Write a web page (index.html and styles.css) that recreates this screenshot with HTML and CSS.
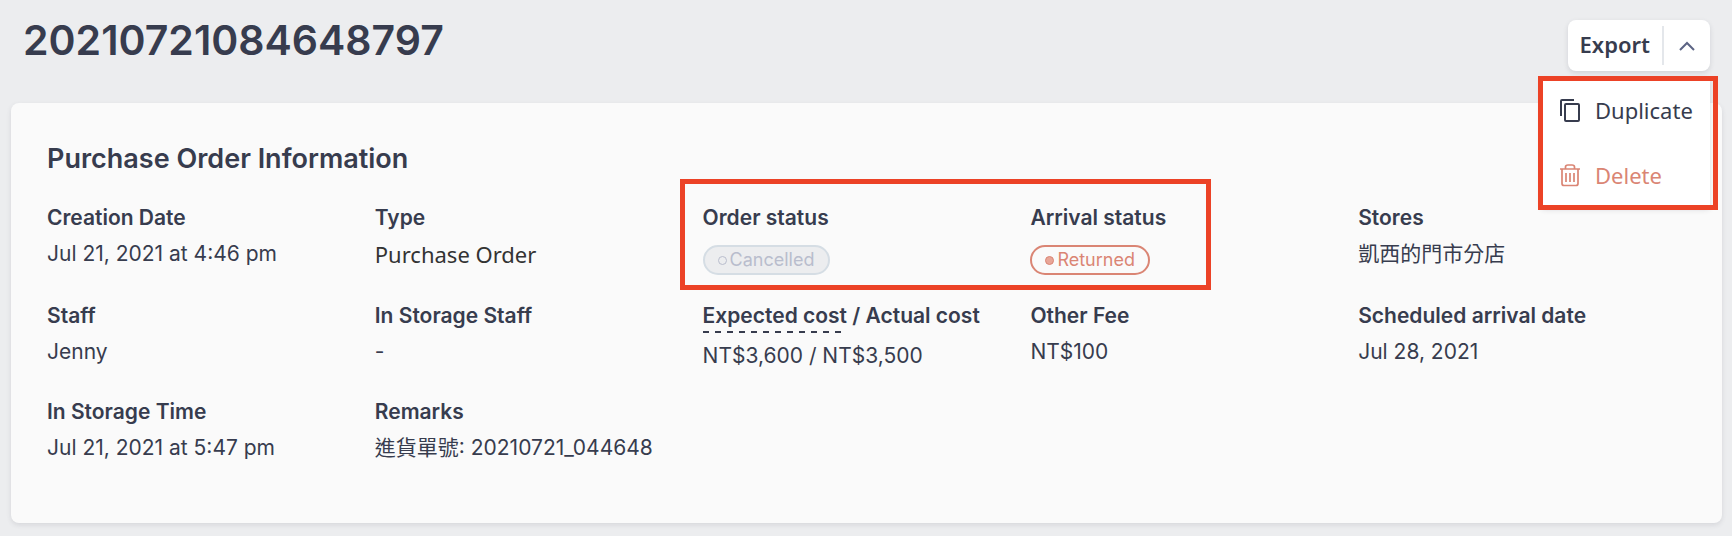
FILE: index.html
```html
<!DOCTYPE html>
<html lang="en">
<head>
    <meta charset="UTF-8">
    <title>Purchase Order</title>
    <link rel="stylesheet" href="styles.css">
</head>
<body>
<header class="top">
    <h1>20210721084648797</h1>
    <div class="actions">
        <div class="btn_group">
            <button type="button" class="export">Export</button>
            <button type="button" class="toggle" aria-label="More actions">
                <svg width="16" height="10" viewBox="0 0 16 10"><path d="M1 9L8 2L15 9" fill="none" stroke="#5c6484" stroke-width="2"/></svg>
            </button>
        </div>
        <div class="menu">
            <button type="button">
                <svg width="22" height="24" viewBox="0 0 22 24" fill="none" stroke="currentColor" stroke-width="2"><path d="M15 2H3Q2 2 2 3V18"/><rect x="6" y="6" width="14" height="17" rx="1"/></svg>
                Duplicate
            </button>
            <button type="button" class="delete">
                <svg width="22" height="24" viewBox="0 0 22 24" fill="none" stroke="currentColor" stroke-width="1.7"><path d="M1 6H21M3 6V20.5Q3 22.5 5 22.5H17Q19 22.5 19 20.5V6M6.5 6V4Q6.5 2 9 2H13Q15.5 2 15.5 4V6"/><path d="M7 10V19M11 10V19M15 10V19"/></svg>
                Delete
            </button>
        </div>
    </div>
</header>
<section class="card">
    <h2>Purchase Order Information</h2>
    <dl class="info">
        <div class="item">
            <dt>Creation Date</dt>
            <dd>Jul 21, 2021 at 4:46 pm</dd>
        </div>
        <div class="item">
            <dt>Type</dt>
            <dd class="type">Purchase Order</dd>
        </div>
        <div class="item marked">
            <dt>Order status</dt>
            <dd class="status"><span class="badge cancelled">Cancelled</span></dd>
        </div>
        <div class="item">
            <dt>Arrival status</dt>
            <dd class="status"><span class="badge returned">Returned</span></dd>
        </div>
        <div class="item">
            <dt>Stores</dt>
            <dd lang="zh-TW">凱西的門市分店</dd>
        </div>
        <div class="item">
            <dt>Staff</dt>
            <dd>Jenny</dd>
        </div>
        <div class="item">
            <dt>In Storage Staff</dt>
            <dd>-</dd>
        </div>
        <div class="item cost">
            <dt><span class="hint">Expected cost</span> / Actual cost</dt>
            <dd>NT$3,600 / NT$3,500</dd>
        </div>
        <div class="item">
            <dt>Other Fee</dt>
            <dd>NT$100</dd>
        </div>
        <div class="item">
            <dt>Scheduled arrival date</dt>
            <dd>Jul 28, 2021</dd>
        </div>
        <div class="item">
            <dt>In Storage Time</dt>
            <dd>Jul 21, 2021 at 5:47 pm</dd>
        </div>
        <div class="item">
            <dt>Remarks</dt>
            <dd lang="zh-TW">進貨單號: 20210721_044648</dd>
        </div>
    </dl>
</section>
</body>
</html>
```
FILE: styles.css
```css
*{
    margin: 0;
    padding: 0;
    box-sizing: border-box;
}
body{
    background-color: #ecedef;
    color: #373c4e;
    font: 21px/30px Inter, "Noto Sans CJK TC", sans-serif;
    padding: 0 10px 12px 11px;
}
button{
    border: none;
    background: none;
    color: inherit;
    font: 22px/30px "Noto Sans", sans-serif;
    cursor: pointer;
}
.top{
    display: flex;
    justify-content: space-between;
    align-items: flex-start;
    height: 103px;
    padding: 20px 12px 0 12px;
}
h1{
    font-size: 41px;
    line-height: 40px;
    font-weight: 600;
}
.actions{
    position: relative;
}
.btn_group{
    display: flex;
    align-items: center;
    height: 51px;
    background-color: #fff;
    border-radius: 8px;
    box-shadow: 0 2px 5px rgba(55, 60, 78, .15);
}
.export{
    padding: 0 12px 3px;
    font-weight: 600;
}
.toggle{
    width: 48px;
    height: 39px;
    border-left: 2px solid #e4e7eb;
}
.toggle svg{
    display: block;
    margin: 0 auto;
}
/* dropdown under the export button */
.menu{
    position: absolute;
    z-index: 2;
    top: 58px;
    right: 0;
    width: 169px;
    background-color: #fff;
    border-radius: 4px;
    box-shadow: 0 2px 5px rgba(55, 60, 78, .15);
}
.menu::after{
    content: "";
    position: absolute;
    top: -2px;
    right: -8px;
    bottom: -2px;
    left: -3px;
    border: 5px solid #ec4226;
    pointer-events: none;
}
.menu button{
    display: flex;
    align-items: center;
    gap: 14px;
    width: 100%;
    height: 65px;
    padding: 0 0 1px 18px;
}
.menu .delete{
    color: #da8574;
}
.card{
    min-height: 420px;
    padding: 36px;
    background-color: #fafafa;
    border-radius: 8px;
    box-shadow: 0 2px 5px rgba(55, 60, 78, .12);
}
h2{
    margin-bottom: 24px;
    font-size: 27px;
    line-height: 40px;
    font-weight: 600;
}
.info{
    display: grid;
    grid-template-columns: repeat(5, 1fr);
    row-gap: 26px;
}
.item{
    position: relative;
    white-space: nowrap;
}
dt{
    margin-bottom: 6px;
    font-weight: 600;
}
.type{
    color: #333;
    font: 22px/30px "Noto Sans", sans-serif;
}
.marked::after{
    content: "";
    position: absolute;
    top: -24px;
    bottom: -15px;
    left: -23px;
    width: 159%;
    border: 5px solid #ec4226;
    pointer-events: none;
}
.status{
    display: flex;
    padding-top: 6px;
}
.badge{
    display: flex;
    align-items: center;
    gap: 3px;
    height: 30px;
    padding: 0 13px;
    border: 2px solid;
    border-radius: 15px;
    font-size: 18px;
}
.badge::before{
    content: "";
    width: 7px;
    height: 7px;
    border: 1px solid;
    border-radius: 50%;
}
.cancelled{
    color: #b9bdcd;
    background-color: #ecedef;
    border-color: #d5dde4;
}
.returned{
    color: #da8574;
}
.returned::before{
    background-color: #e8a698;
}
.hint{
    display: inline-block;
    height: 32px;
    /* 6px dashes with a 6px gap */
    background: repeating-linear-gradient(to right, #373c4e 0 6px, transparent 6px 12px) left bottom / 100% 2px no-repeat;
}
.cost dt{
    height: 34px;
}
```
